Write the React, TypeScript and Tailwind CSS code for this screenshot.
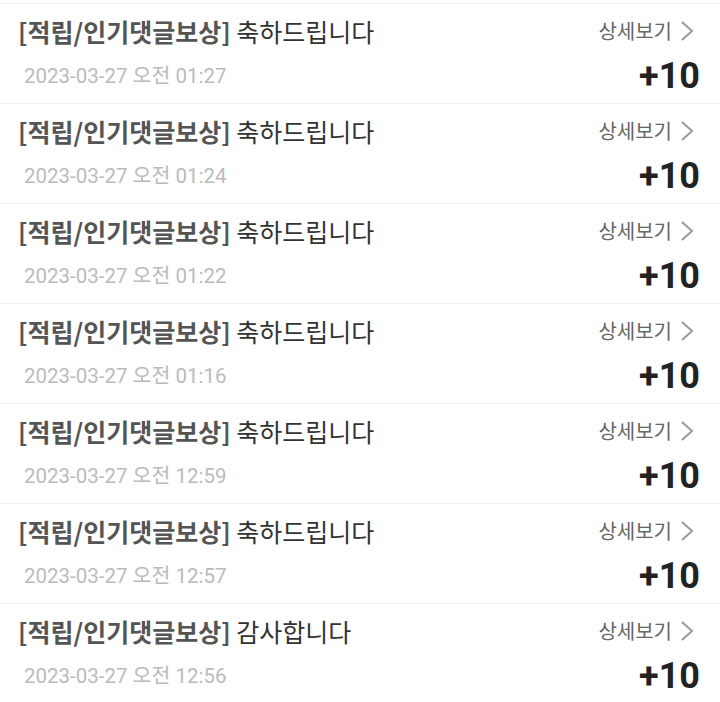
const rows = [
  { msg: "축하드립니다", date: "2023-03-27 오전 01:27" },
  { msg: "축하드립니다", date: "2023-03-27 오전 01:24" },
  { msg: "축하드립니다", date: "2023-03-27 오전 01:22" },
  { msg: "축하드립니다", date: "2023-03-27 오전 01:16" },
  { msg: "축하드립니다", date: "2023-03-27 오전 12:59" },
  { msg: "축하드립니다", date: "2023-03-27 오전 12:57" },
  { msg: "감사합니다", date: "2023-03-27 오전 12:56" },
];

export default function App() {
  return (
    <div className="w-[720px] h-[702px] overflow-hidden bg-white">
      <div className="h-[4px] border-b border-[#eeeeee]" />
      {rows.map((row, index) => (
        <div key={index} className="h-[100px] border-b border-[#eeeeee] pt-[10px] pl-[18px] pr-[20px] flex flex-col">
          <div className="h-[34px] flex items-center justify-between">
            <div className="text-[25px] text-[#333333] font-['Noto_Sans_CJK_KR',sans-serif] leading-none">
              <span className="font-bold text-[#555555]">[적립/인기댓글보상]</span> {row.msg}
            </div>
            <div className="flex items-center">
              <span className="text-[20px] text-[#666666] font-['Noto_Sans_CJK_KR',sans-serif] leading-none">상세보기</span>
              <svg width="14" height="22" viewBox="0 0 14 22" className="ml-[8px] mr-[6px]">
                <polyline points="2,2 12,11 2,20" fill="none" stroke="#999999" strokeWidth="2" />
              </svg>
            </div>
          </div>
          <div className="mt-[8px] h-[40px] flex items-center justify-between">
            <span className="pl-[6px] text-[20.5px] text-[#bbbbbb] font-['Roboto','Noto_Sans_CJK_KR',sans-serif] leading-none">{row.date}</span>
            <span className="text-[36px] font-bold text-[#222222] font-['Roboto',sans-serif] leading-none">+10</span>
          </div>
        </div>
      ))}
    </div>
  );
}
